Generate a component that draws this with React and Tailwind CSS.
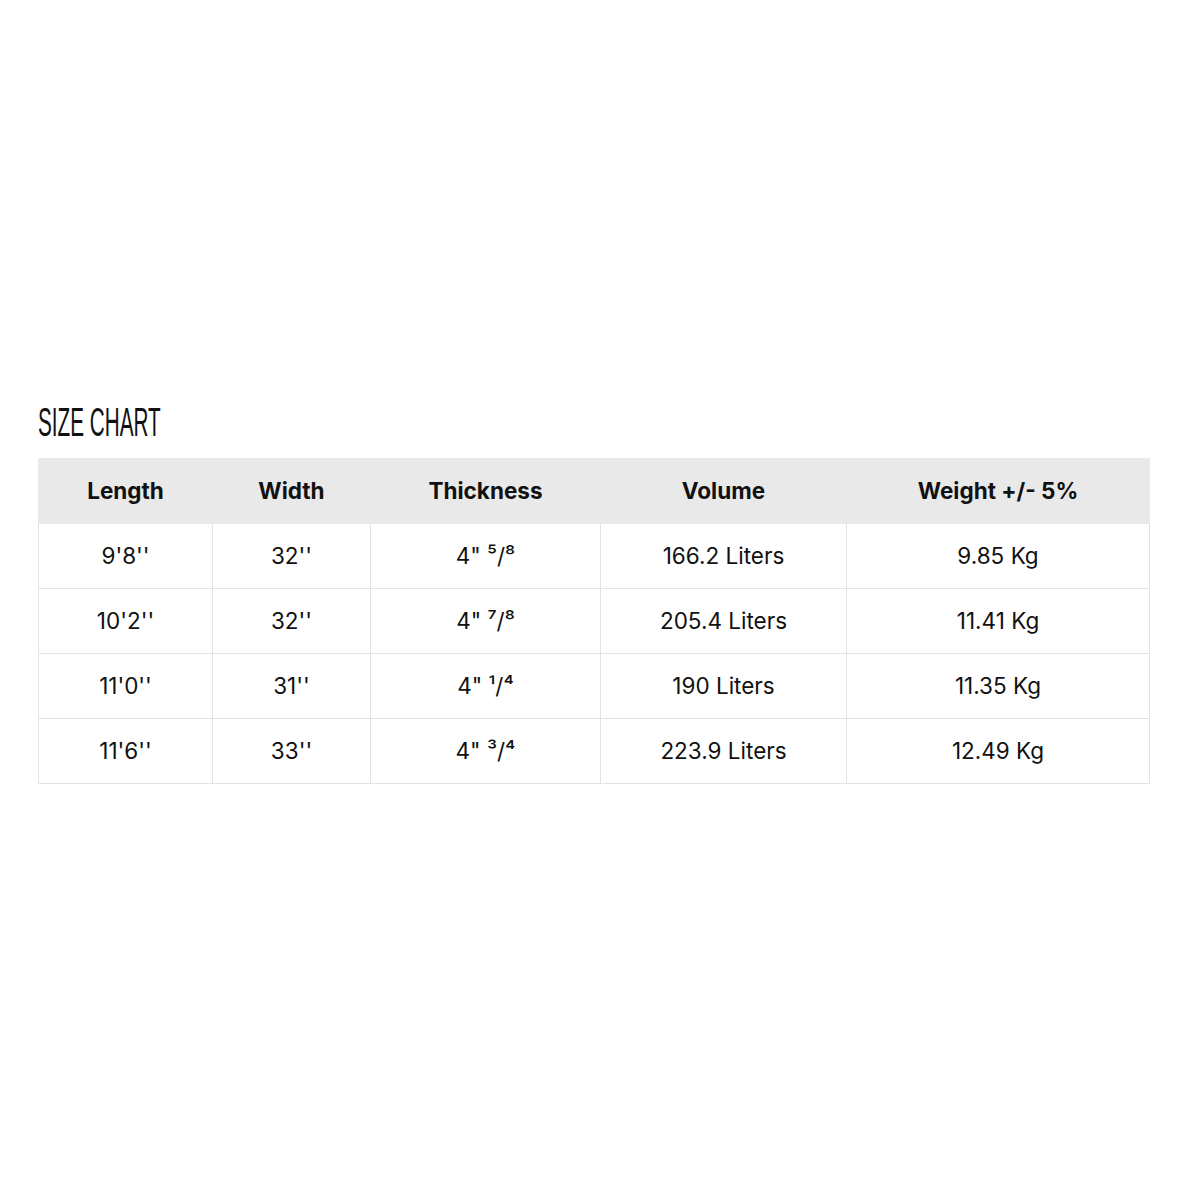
const rows = [
  ["9'8''", "32''", "4\" ⁵/⁸", "166.2 Liters", "9.85 Kg"],
  ["10'2''", "32''", "4\" ⁷/⁸", "205.4 Liters", "11.41 Kg"],
  ["11'0''", "31''", "4\" ¹/⁴", "190 Liters", "11.35 Kg"],
  ["11'6''", "33''", "4\" ³/⁴", "223.9 Liters", "12.49 Kg"],
];

const headers = ["Length", "Width", "Thickness", "Volume", "Weight +/- 5%"];
const widths = ["w-[174px]", "w-[158px]", "w-[230px]", "w-[246px]", "w-[303px]"];

export default function App() {
  return (
    <div
      className="w-[1200px] h-[1200px] bg-white pt-[400px] pl-[38px]"
      style={{ fontFamily: "Inter, 'Liberation Sans', sans-serif" }}
    >
      {/* Title */}
      <div className="h-[58px]">
        <div
          className="inline-block origin-left scale-x-[0.505] text-[41px] leading-[44px] text-[#111] font-normal whitespace-nowrap"
          style={{ fontFamily: "'Liberation Sans Narrow', 'Liberation Sans', sans-serif" }}
        >
          SIZE CHART
        </div>
      </div>

      {/* Table */}
      <table className="border-collapse text-[#111] text-[22.5px]">
        <thead>
          <tr className="bg-[#e9e9e9] h-[65px]">
            {headers.map((h, i) => (
              <th key={h} className={`${widths[i]} font-bold text-center border border-[#e9e9e9] p-0`}>
                {h}
              </th>
            ))}
          </tr>
        </thead>
        <tbody>
          {rows.map((r, ri) => (
            <tr key={ri} className="h-[65px]">
              {r.map((c, ci) => (
                <td key={ci} className="text-center border border-[#e3e3e3] p-0">
                  {c}
                </td>
              ))}
            </tr>
          ))}
        </tbody>
      </table>
    </div>
  );
}
